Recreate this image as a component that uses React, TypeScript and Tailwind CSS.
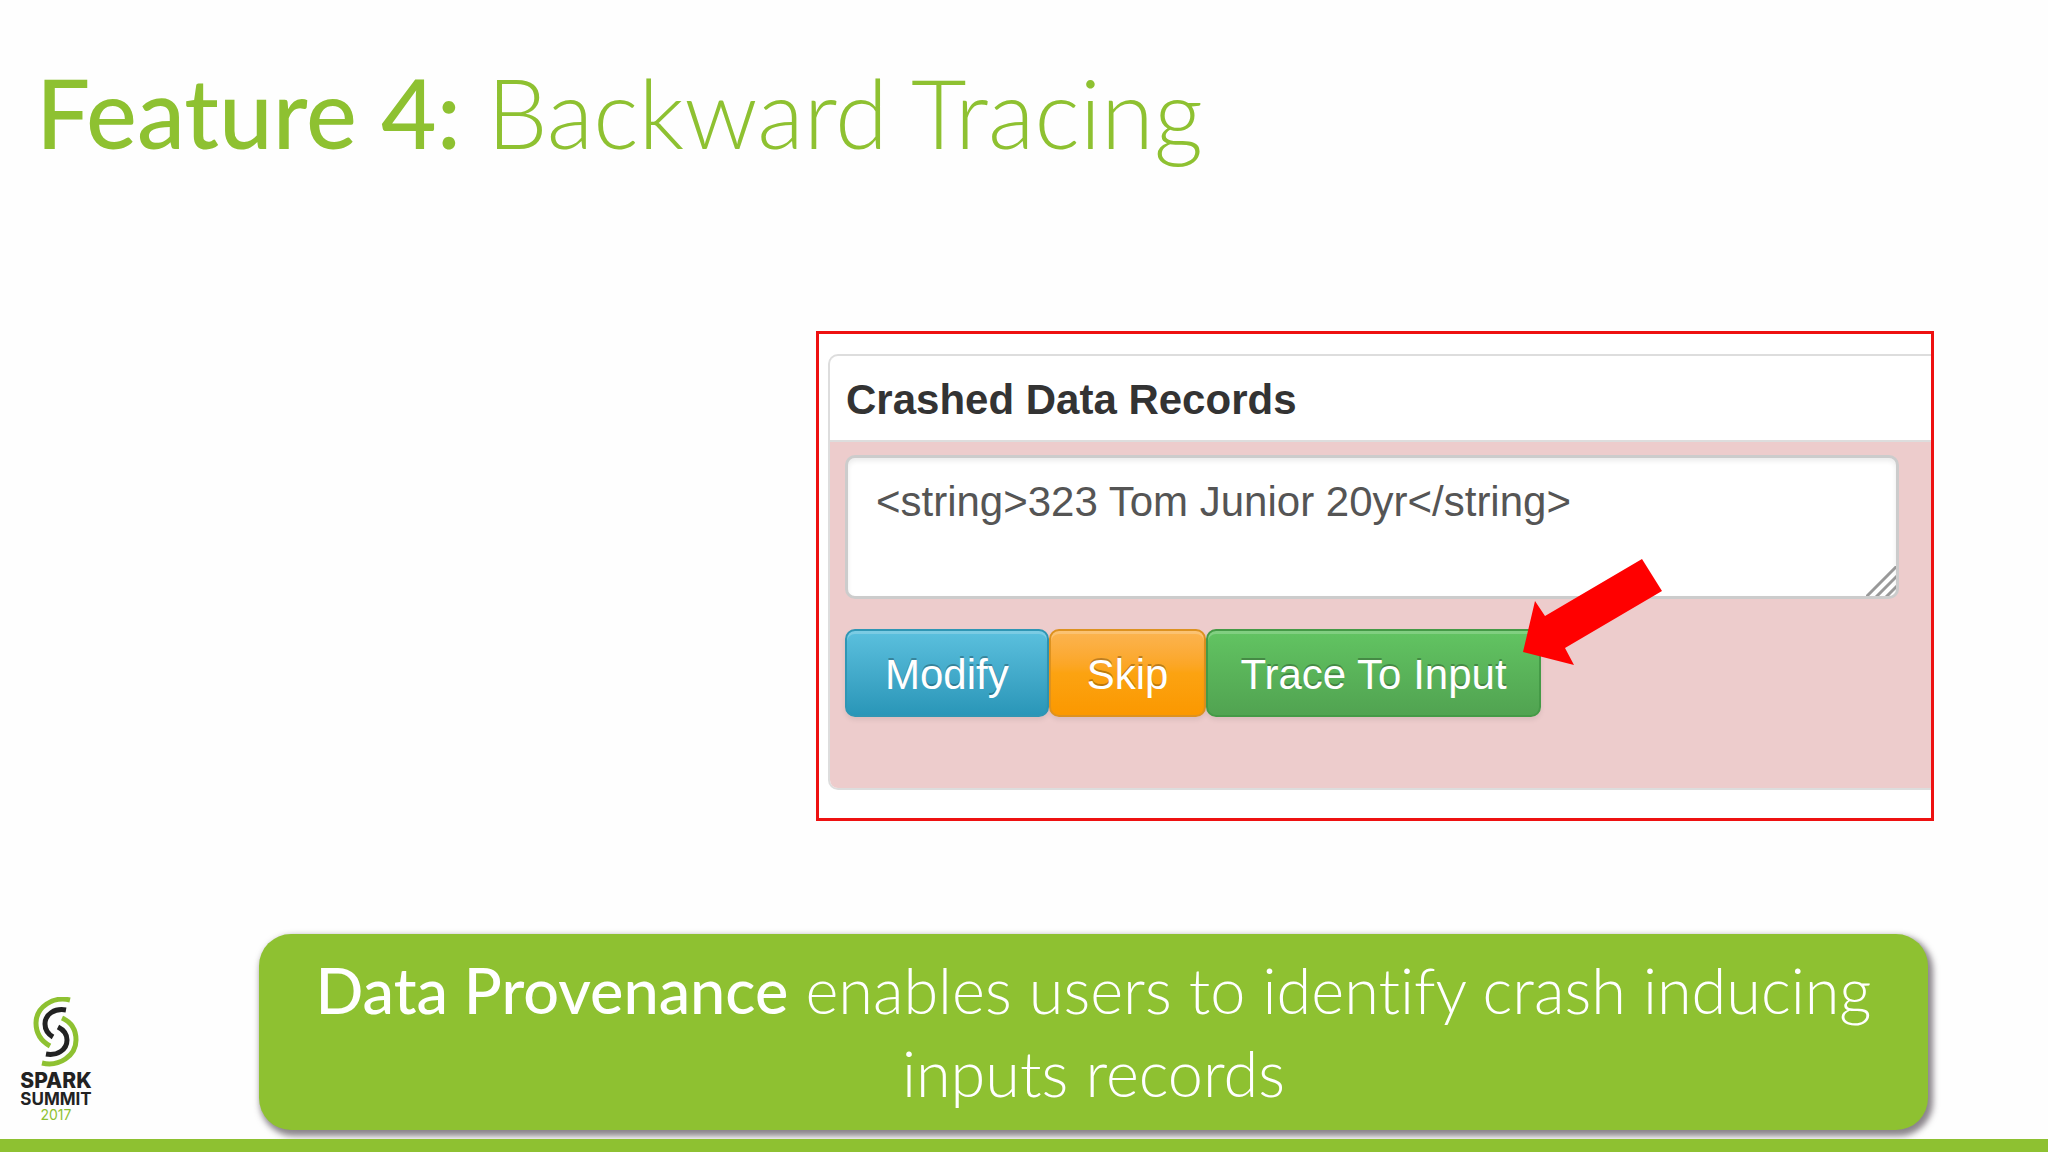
import type { ReactNode } from "react";

function PanelButton({ tone, children }: { tone: string; children: ReactNode }) {
  return (
    <button
      type="button"
      className={`h-[88px] rounded-[10px] border-2 pt-1 text-[42px] leading-none text-white [text-shadow:0_-2px_0_rgba(0,0,0,0.25)] shadow-[inset_0_3px_0_rgba(255,255,255,0.2),0_3px_5px_rgba(0,0,0,0.08)] ${tone}`}
    >
      {children}
    </button>
  );
}

function PointerArrow() {
  return (
    <svg
      aria-hidden="true"
      className="pointer-events-none absolute -top-[70px] left-[317px]"
      width="140"
      height="107"
      viewBox="0 0 140 107"
    >
      <path d="M0 93 12 42 22 57 119 0 139 32 42 89 51 106Z" fill="#ff0000" />
    </svg>
  );
}

function SparkLogo() {
  return (
    <div className="flex w-[72px] flex-col items-center font-['Inter',sans-serif] text-[#222222]">
      <svg aria-hidden="true" width="48" height="70" viewBox="0 0 48 70" fill="none" strokeWidth="5">
        <path d="M38 3C21 -1 4 10 4 26C4 36 9 44 18 49" stroke="#8ec131" />
        <path d="M34 13C23 11 13 17 13 27C13 33 16 37 21 40" stroke="#222222" />
        <path d="M10 66C27 70 44 59 44 43C44 33 39 25 30 21" stroke="#8ec131" />
        <path d="M14 57C25 59 35 53 35 43C35 37 32 33 26 30" stroke="#222222" />
      </svg>
      <span className="mt-[3px] text-[21px] leading-[21px] font-extrabold">SPARK</span>
      <span className="text-[17px] leading-[17px] font-bold">SUMMIT</span>
      <span className="text-[14px] leading-[14px] text-[#8ec131]">2017</span>
    </div>
  );
}

export default function App() {
  return (
    <div className="flex min-h-screen flex-col bg-[#fefefe] font-['Lato',sans-serif] [font-variant-ligatures:none]">
      <header className="px-9 pt-14">
        <h1 className="text-[96px] leading-[112px] font-light text-[#8ec131]">
          <strong className="font-medium">Feature 4:</strong> Backward Tracing
        </h1>
      </header>

      <main className="mt-[163px] grid grid-cols-[816fr_1118fr_114fr]">
        <section className="col-start-2 border-[3px] border-[#ee1111] bg-white pt-5 pb-7 pl-[9px] font-['Liberation_Sans',sans-serif]">
          <div className="rounded-l-[10px] border-2 border-r-0 border-[#dddddd]">
            <h2 className="px-4 pt-5 pb-4 text-[42px] leading-[48px] font-bold text-[#333333]">
              <label htmlFor="record">Crashed Data Records</label>
            </h2>
            <div className="rounded-bl-[8px] border-t-2 border-[#dddddd] bg-[#edcccc] pt-[13px] pr-8 pb-[71px] pl-[15px]">
              <div className="relative">
                <textarea
                  id="record"
                  defaultValue="<string>323 Tom Junior 20yr</string>"
                  spellCheck={false}
                  className="block h-[144px] w-full resize-none rounded-[10px] border-[3px] border-[#cccccc] bg-white px-7 py-5 text-[42px] leading-[48px] text-[#555555] shadow-[inset_0_3px_5px_rgba(0,0,0,0.08)] outline-none"
                />
                <svg
                  aria-hidden="true"
                  className="absolute right-[3px] bottom-[3px]"
                  width="30"
                  height="30"
                  viewBox="0 0 30 30"
                  stroke="#999999"
                  strokeWidth="3"
                >
                  <path d="M0 31 31 0M10 31 31 10M20 31 31 20" />
                </svg>
              </div>
              <div className="mt-[30px] flex">
                <PanelButton tone="border-[#2f96b4] bg-linear-to-b from-[#5bc0de] to-[#2996b8] px-[38px]">
                  Modify
                </PanelButton>
                <PanelButton tone="border-[#dd9220] bg-linear-to-b from-[#fbb450] via-[#fca311] to-[#fb9800] px-9">
                  Skip
                </PanelButton>
                <div className="relative">
                  <PanelButton tone="border-[#449a46] bg-linear-to-b from-[#62c462] to-[#51a351] px-8">
                    Trace To Input
                  </PanelButton>
                  <PointerArrow />
                </div>
              </div>
            </div>
          </div>
        </section>
      </main>

      <footer className="mt-auto">
        <div className="grid grid-cols-[259fr_1669fr_120fr] items-end pb-[9px]">
          <div className="pb-2 pl-5">
            <SparkLogo />
          </div>
          <p className="rounded-[32px] bg-[#8ec131] px-10 pt-[14px] pb-4 text-center text-[63px] leading-[83px] font-light text-white shadow-[3px_4px_6px_2px_rgba(60,50,60,0.6)]">
            <strong className="font-medium">Data Provenance</strong> enables users to identify crash inducing
            inputs records
          </p>
        </div>
        <div className="relative h-[13px] bg-[#8ec131]" />
      </footer>
    </div>
  );
}
